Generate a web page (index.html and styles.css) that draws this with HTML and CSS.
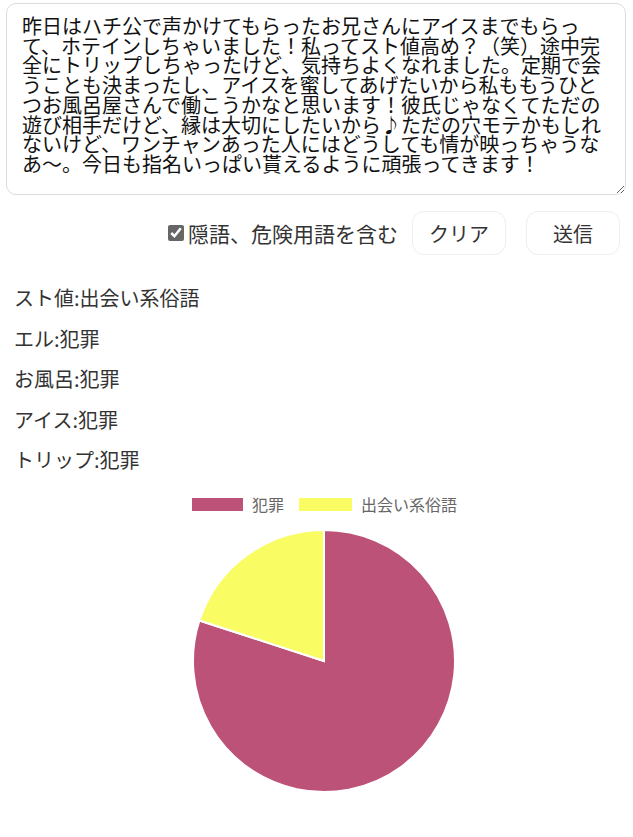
FILE: index.html
```html
<!DOCTYPE html>
<html lang="ja">
<head>
<meta charset="utf-8">
<title>隠語チェッカー</title>
<link rel="stylesheet" href="styles.css">
</head>
<body>
<div class="page">
  <textarea class="input">昨日はハチ公で声かけてもらったお兄さんにアイスまでもらって、ホテインしちゃいました！私ってスト値高め？（笑）途中完全にトリップしちゃったけど、気持ちよくなれました。定期で会うことも決まったし、アイスを蜜してあげたいから私ももうひとつお風呂屋さんで働こうかなと思います！彼氏じゃなくてただの遊び相手だけど、縁は大切にしたいから♪ただの穴モテかもしれないけど、ワンチャンあった人にはどうしても情が映っちゃうなあ～。今日も指名いっぱい貰えるように頑張ってきます！</textarea>
  <div class="controls">
    <label class="check"><input type="checkbox" checked><span>隠語、危険用語を含む</span></label>
    <button class="btn">クリア</button>
    <button class="btn">送信</button>
  </div>
  <div class="results">
    <p>スト値:出会い系俗語</p>
    <p>エル:犯罪</p>
    <p>お風呂:犯罪</p>
    <p>アイス:犯罪</p>
    <p>トリップ:犯罪</p>
  </div>
  <svg class="chart" width="633" height="340" viewBox="0 0 633 340">
    <rect x="192" y="18" width="51" height="13" fill="#bc5278"/>
    <text x="252" y="31" class="legend">犯罪</text>
    <rect x="299" y="18" width="53" height="13" fill="#f9fd63"/>
    <text x="361" y="31" class="legend">出会い系俗語</text>
    <path d="M324 181 L324 50 A131 131 0 1 1 199.41 140.52 Z" fill="#bc5278" stroke="#fff" stroke-width="2"/>
    <path d="M324 181 L199.41 140.52 A131 131 0 0 1 324 50 Z" fill="#f9fd63" stroke="#fff" stroke-width="2"/>
  </svg>
</div>
</body>
</html>
```
FILE: styles.css
```css
html, body {
  margin: 0;
  padding: 0;
  background: #fff;
}
.page {
  font-family: "Noto Sans CJK JP", "Noto Sans", sans-serif;
  color: #333;
  display: flex;
  flex-direction: column;
}
.input {
  box-sizing: border-box;
  margin: 3px 0 0 6px;
  width: 620px;
  height: 192px;
  padding: 12px 15px;
  border: 1px solid #dcdcdc;
  border-radius: 10px;
  font-family: "Noto Sans CJK JP", sans-serif;
  font-size: 20px;
  line-height: 19.7px;
  color: #111;
  background: #fff;
  outline: none;
}
.controls {
  display: flex;
  justify-content: flex-end;
  align-items: center;
  gap: 14px;
  margin-top: 16px;
  padding-right: 13px;
}
.check {
  display: flex;
  align-items: center;
  gap: 4px;
  font-size: 21px;
  color: #333;
}
.check input {
  margin: 0;
  width: 16px;
  height: 16px;
  accent-color: #666;
}
.btn {
  box-sizing: border-box;
  width: 94px;
  height: 44px;
  border: 1px solid #eee;
  border-radius: 12px;
  background: #fff;
  font-family: "Noto Sans CJK JP", sans-serif;
  font-size: 20px;
  color: #333;
  padding: 0;
}
.btn + .btn {
  margin-left: 6px;
}
.results {
  display: flex;
  flex-direction: column;
  gap: 16.5px;
  margin-top: 31px;
  padding-left: 14px;
}
.results p {
  margin: 0;
  font-size: 20px;
  line-height: 24px;
  color: #333;
}
.chart {
  display: block;
  margin-top: 8px;
}
.legend {
  font-family: "Noto Sans CJK JP", sans-serif;
  font-size: 16px;
  fill: #666;
}
```
